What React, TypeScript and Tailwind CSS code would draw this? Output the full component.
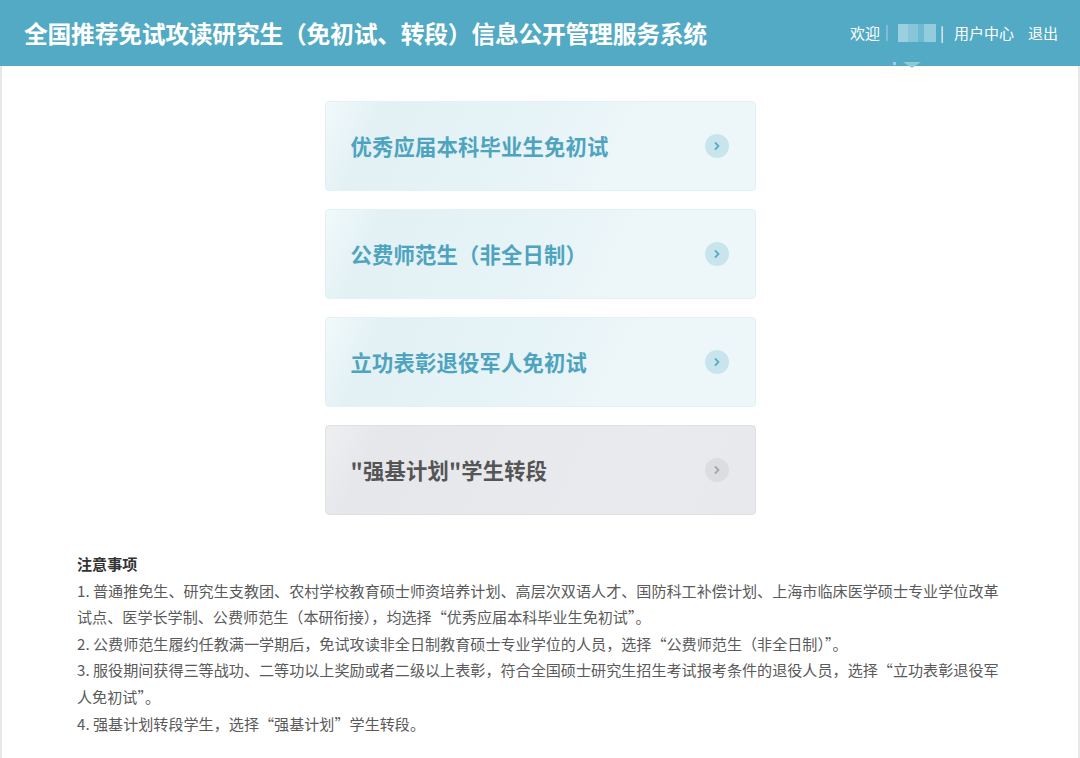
import React from 'react';

const font = { fontFamily: '"Microsoft YaHei", "Noto Sans CJK SC", "Noto Sans", sans-serif' };

function Chevron({ gray }: { gray?: boolean }) {
  return (
    <span
      className={`flex h-6 w-6 items-center justify-center rounded-full ${gray ? 'bg-[#dcdde0]' : 'bg-[#c8e5ee]'}`}
    >
      <svg width="8" height="10" viewBox="0 0 8 10" fill="none">
        <path
          d="M2.5 2 L5.5 5 L2.5 8"
          stroke={gray ? '#a5a7ab' : '#5aaec6'}
          strokeWidth="1.8"
          strokeLinecap="round"
          strokeLinejoin="round"
        />
      </svg>
    </span>
  );
}

function EntryCard({ label, gray }: { label: string; gray?: boolean }) {
  return (
    <a
      href="#"
      className={`flex h-[90px] w-[431px] items-center justify-between rounded-[4px] border pl-[25px] pr-[26px] ${
        gray
          ? 'border-[#dfe0e3] bg-[linear-gradient(115deg,#eeeff1_0%,#e6e7ea_12%,#e8e9ec_45%,#e9eaed_70%,#e8e9ec_100%)] text-[#555]'
          : 'border-[#e3f0f4] bg-[linear-gradient(115deg,#f1f9fb_0%,#e3f1f5_12%,#e6f3f7_45%,#edf6f9_68%,#edf6f9_100%)] text-[#4ea4be]'
      }`}
    >
      <span className="text-[21.3px] font-bold tracking-[0.2px]">{label}</span>
      <Chevron gray={gray} />
    </a>
  );
}

export default function App() {
  return (
    <div className="min-h-[758px] w-[1080px] bg-white" style={font}>
      {/* Header */}
      <header className="relative flex h-[66px] items-center justify-between bg-[#53aac4] pl-[24px] pr-[22px] text-white">
        <h1 className="text-[23.8px] font-bold tracking-[-0.25px]">
          全国推荐免试攻读研究生（免初试、转段）信息公开管理服务系统
        </h1>
        <div className="flex items-center text-[15px]">
          <span>欢迎</span>
          <span className="ml-[6px] flex h-[18px] items-center">
            <span className="h-[16px] w-[2px] bg-[#7cc0d3]" />
            <span className="ml-[10px] h-[18px] w-[10px] bg-[#9ad0df]" />
            <span className="h-[18px] w-[10px] bg-[#86c6d8]" />
            <span className="h-[18px] w-[6px] bg-[#6db9ce]" />
            <span className="h-[18px] w-[12px] bg-[#93cddd]" />
          </span>
          <span className="ml-[4px] mr-[10px]">|</span>
          <a href="#">用户中心</a>
          <a href="#" className="ml-[14px]">退出</a>
        </div>
        <span className="absolute left-[903px] top-[62px] h-0 w-0 border-x-[9px] border-t-[6px] border-x-transparent border-t-[#8fcadb]" />
        <span className="absolute left-[893px] top-[62px] h-[3px] w-[3px] bg-[#9dd0de]" />
      </header>

      <main className="min-h-[692px] border-x-2 border-[#e8e8e8]">
        <div className="flex flex-col items-center gap-[18px] pt-[35px]">
          <EntryCard label="优秀应届本科毕业生免初试" />
          <EntryCard label="公费师范生（非全日制）" />
          <EntryCard label="立功表彰退役军人免初试" />
          <EntryCard label={'"强基计划"学生转段'} gray />
        </div>

        <section className="mt-[35px] w-[1010px] pl-[75px] text-[15.1px] leading-[26.6px] text-[#5a5a5a]">
          <h3 className="font-bold text-[#333]">注意事项</h3>
          <p>
            1. 普通推免生、研究生支教团、农村学校教育硕士师资培养计划、高层次双语人才、国防科工补偿计划、上海市临床医学硕士专业学位改革试点、医学长学制、公费师范生（本研衔接），均选择“优秀应届本科毕业生免初试”。
          </p>
          <p>2. 公费师范生履约任教满一学期后，免试攻读非全日制教育硕士专业学位的人员，选择“公费师范生（非全日制）”。</p>
          <p>
            3. 服役期间获得三等战功、二等功以上奖励或者二级以上表彰，符合全国硕士研究生招生考试报考条件的退役人员，选择“立功表彰退役军人免初试”。
          </p>
          <p>4. 强基计划转段学生，选择“强基计划”学生转段。</p>
        </section>
      </main>
    </div>
  );
}
